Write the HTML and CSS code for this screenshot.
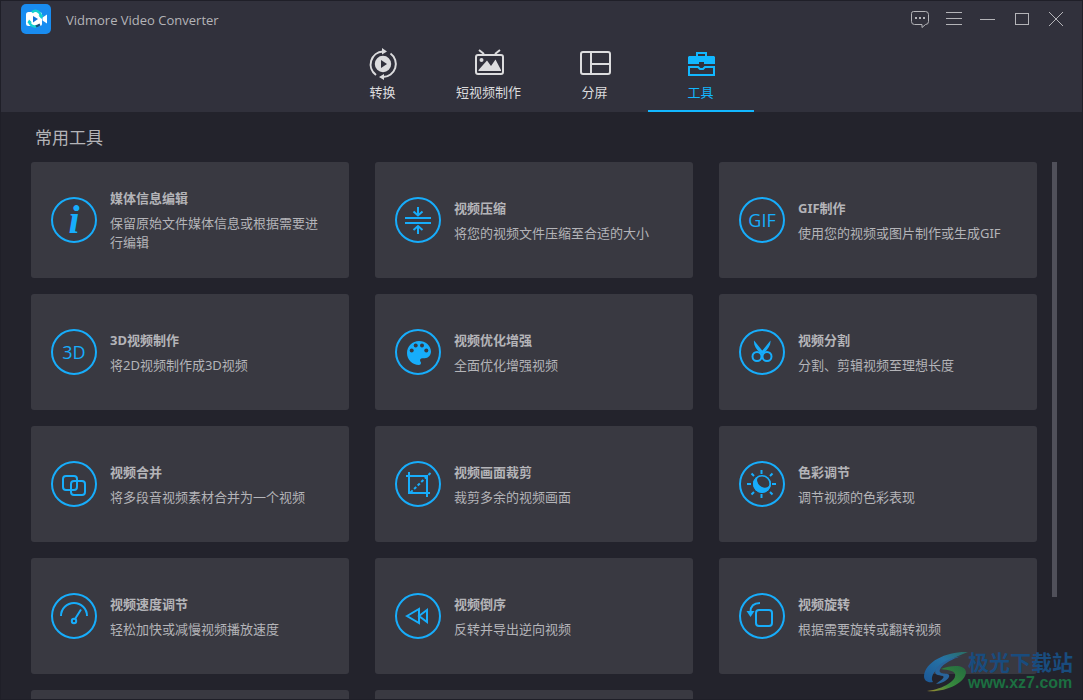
FILE: index.html
```html
<!DOCTYPE html>
<html lang="zh-CN">
<head>
<meta charset="utf-8">
<meta name="viewport" content="width=device-width, initial-scale=1">
<title>Vidmore Video Converter</title>
<link rel="stylesheet" href="styles.css">
</head>
<body>
<div class="window">
  <header class="header">
    <div class="titlebar">
      <svg class="logo" viewBox="0 0 30 30" aria-hidden="true">
        <rect width="30" height="30" rx="5" fill="#198cf0"/>
        <rect x="5" y="8" width="16" height="14" rx="2.500" fill="#fff"/>
        <path d="M21.500 13.500L26 10.500V19.500L21.500 16.500Z" fill="#fff"/>
        <path d="M11 8.500C14 5 19 7 20 12" fill="none" stroke="#12cfd0" stroke-width="2.500"/>
        <path d="M8 17C8.500 21 12 23.500 16 22" fill="none" stroke="#12cfd0" stroke-width="2.500"/>
        <path d="M6.500 19L8 15.500L11 18.500ZM17.500 11.500L22.500 11L20.500 15Z" fill="#12cfd0"/>
        <path d="M15 22.500L19 20.500" stroke="#174e78" stroke-width="2"/>
        <path d="M12 12L17 15L12 18.500Z" fill="#1272d8"/>
      </svg>
      <span class="app-name">Vidmore Video Converter</span>
      <div class="controls">
        <button class="control" type="button" aria-label="反馈"><svg viewBox="0 0 20 20"><path d="M3.500 2.500H15.500Q18.500 2.500 18.500 5.500V12.500Q18.500 15.500 15.500 15.500L12 18.500V15.500H4.500Q1.500 15.500 1.500 12.500V4.500Q1.500 2.500 3.500 2.500Z"/><path d="M5 9H7M9 9H11M13 9H15" stroke-width="2"/></svg></button>
        <button class="control" type="button" aria-label="菜单"><svg viewBox="0 0 20 20"><path d="M2 3.500H18M2 9.500H18M2 15.500H18"/></svg></button>
        <button class="control" type="button" aria-label="最小化"><svg viewBox="0 0 20 20"><path d="M2 10.500H17"/></svg></button>
        <button class="control" type="button" aria-label="最大化"><svg viewBox="0 0 20 20"><rect x="3.500" y="4.500" width="13" height="11"/></svg></button>
        <button class="control" type="button" aria-label="关闭"><svg viewBox="0 0 20 20"><path d="M3 3L17 17M17 3L3 17"/></svg></button>
      </div>
    </div>
    <nav class="tabs">
      <button class="tab" type="button">
        <svg class="tab-icon" viewBox="0 0 32 32" aria-hidden="true">
          <g fill="none" stroke="currentColor" stroke-width="2"><path d="M9 27A13 13 0 0 1 16 3.500"/><path d="M23.500 5.500A13 13 0 0 1 16 29"/></g>
          <path d="M15 0L20 3.500L15 6.500ZM17 26L12 29L17 32Z" fill="currentColor"/>
          <path fill="currentColor" fill-rule="evenodd" d="M16 7.800A8.200 8.200 0 1 1 16 24.200A8.200 8.200 0 1 1 16 7.800ZM14 12V20L20 16Z"/>
        </svg>
        <span>转换</span>
      </button>
      <button class="tab" type="button">
        <svg class="tab-icon" viewBox="0 0 32 32" aria-hidden="true">
          <g fill="none" stroke="currentColor" stroke-width="2"><rect x="3" y="7" width="27" height="19" rx="2"/><path d="M6 2L11 6M27 2L22 6"/></g>
          <circle cx="8.500" cy="12" r="2" fill="currentColor"/>
          <path d="M5.500 23V22L14 12.500L18 18L22.500 11.500L28 22V23Z" fill="currentColor"/>
        </svg>
        <span>短视频制作</span>
      </button>
      <button class="tab" type="button">
        <svg class="tab-icon" viewBox="0 0 32 32" aria-hidden="true">
          <g fill="none" stroke="currentColor" stroke-width="2"><rect x="2" y="4" width="29" height="22" rx="2"/><path d="M12 4V26M12 16H31"/></g>
        </svg>
        <span>分屏</span>
      </button>
      <button class="tab tab-active" type="button" aria-current="page">
        <svg class="tab-icon" viewBox="0 0 32 32" aria-hidden="true">
          <path d="M12 9V5H21V9" fill="none" stroke="currentColor" stroke-width="2"/>
          <path d="M4 8H29L30 9V16H19V14H14V16H3V9Z" fill="currentColor"/>
          <path d="M4 19H13L15 21H18L20 19H29V27H4Z" fill="none" stroke="currentColor" stroke-width="2"/>
        </svg>
        <span>工具</span>
      </button>
    </nav>
  </header>

  <main class="content">
    <h1 class="heading">常用工具</h1>
    <div class="scroller">
      <div class="tools">
        <button class="tool" type="button">
          <span class="badge badge-info" aria-hidden="true">i</span>
          <span class="tool-text"><strong class="tool-name">媒体信息编辑</strong><span class="tool-desc">保留原始文件媒体信息或根据需要进行编辑</span></span>
        </button>
        <button class="tool" type="button">
          <span class="badge"><svg viewBox="0 0 42 42" aria-hidden="true"><path d="M8 19H34M8 24H34M21 8V16M16.500 12.500L21 16.500L25.500 12.500M21 35V27M16.500 31L21 27L25.500 31"/></svg></span>
          <span class="tool-text"><strong class="tool-name">视频压缩</strong><span class="tool-desc">将您的视频文件压缩至合适的大小</span></span>
        </button>
        <button class="tool" type="button">
          <span class="badge badge-word" aria-hidden="true">GIF</span>
          <span class="tool-text"><strong class="tool-name">GIF制作</strong><span class="tool-desc">使用您的视频或图片制作或生成GIF</span></span>
        </button>
        <button class="tool" type="button">
          <span class="badge badge-word" aria-hidden="true">3D</span>
          <span class="tool-text"><strong class="tool-name">3D视频制作</strong><span class="tool-desc">将2D视频制作成3D视频</span></span>
        </button>
        <button class="tool" type="button">
          <span class="badge"><svg viewBox="0 0 42 42" aria-hidden="true"><path class="solid" d="M22 10C15.400 10 10 15.400 10 22S15.400 34 22 34C23.100 34 24 33.100 24 32C24 31.500 23.800 31 23.500 30.700C22.400 29 23.400 27.300 25.500 27.300H27.700C31.300 27.300 34 24.300 34 20.600C34 14.800 28.600 10 22 10Z"/><g class="hole"><circle cx="14.700" cy="19.500" r="2"/><circle cx="18.700" cy="14.500" r="2"/><circle cx="25" cy="14.500" r="2"/><circle cx="29.300" cy="19.500" r="2"/></g></svg></span>
          <span class="tool-text"><strong class="tool-name">视频优化增强</strong><span class="tool-desc">全面优化增强视频</span></span>
        </button>
        <button class="tool" type="button">
          <span class="badge"><svg viewBox="0 0 42 42" aria-hidden="true"><circle cx="16" cy="25.500" r="4.500"/><circle cx="26" cy="25.500" r="4.500"/><path class="solid" d="M13 9.500L22 20.500L24 22L22 23L19 21.500C15 18 12.500 14 13 9.500ZM29.500 9.500C30 14 27 18 23.500 21.500L20 23L18.500 22L20.500 20.500Z"/></svg></span>
          <span class="tool-text"><strong class="tool-name">视频分割</strong><span class="tool-desc">分割、剪辑视频至理想长度</span></span>
        </button>
        <button class="tool" type="button">
          <span class="badge"><svg viewBox="0 0 42 42" aria-hidden="true"><rect x="10" y="13" width="14" height="14" rx="3"/><rect x="18" y="18" width="14" height="14" rx="3"/></svg></span>
          <span class="tool-text"><strong class="tool-name">视频合并</strong><span class="tool-desc">将多段音视频素材合并为一个视频</span></span>
        </button>
        <button class="tool" type="button">
          <span class="badge"><svg viewBox="0 0 42 42" aria-hidden="true"><path d="M12 9V30H33M9 13H30V34"/><path d="M13.500 29.500L34 9.500" stroke-dasharray="3 2"/></svg></span>
          <span class="tool-text"><strong class="tool-name">视频画面裁剪</strong><span class="tool-desc">裁剪多余的视频画面</span></span>
        </button>
        <button class="tool" type="button">
          <span class="badge"><svg viewBox="0 0 42 42" aria-hidden="true"><circle class="solid" cx="21" cy="21" r="9"/><ellipse class="hole" cx="22.500" cy="18.500" rx="7" ry="5.500" transform="rotate(40 22.500 18.500)"/><circle cx="21" cy="21" r="8.200" stroke-width="1.500"/><path d="M20.500 7V11M20.500 31V35M6 21H10M31 21H35M10.500 10.500L13 13M31.500 10.500L29 13M10.500 31.500L13 29M31.500 31.500L29 29"/></svg></span>
          <span class="tool-text"><strong class="tool-name">色彩调节</strong><span class="tool-desc">调节视频的色彩表现</span></span>
        </button>
        <button class="tool" type="button">
          <span class="badge"><svg viewBox="0 0 42 42" aria-hidden="true"><path d="M8 21A13 13 0 0 1 34 21M28 14.500L22 24"/><circle cx="21" cy="26" r="2.200"/></svg></span>
          <span class="tool-text"><strong class="tool-name">视频速度调节</strong><span class="tool-desc">轻松加快或减慢视频播放速度</span></span>
        </button>
        <button class="tool" type="button">
          <span class="badge"><svg viewBox="0 0 42 42" aria-hidden="true"><path d="M10 21L22 14V28ZM22 21L30 15V27Z"/></svg></span>
          <span class="tool-text"><strong class="tool-name">视频倒序</strong><span class="tool-desc">反转并导出逆向视频</span></span>
        </button>
        <button class="tool" type="button">
          <span class="badge"><svg viewBox="0 0 42 42" aria-hidden="true"><rect x="15" y="15" width="16" height="16" rx="3"/><path d="M19 8C13 8 9.500 11 9.500 17"/><path class="solid" d="M5.500 16H13.500L9.500 22Z"/></svg></span>
          <span class="tool-text"><strong class="tool-name">视频旋转</strong><span class="tool-desc">根据需要旋转或翻转视频</span></span>
        </button>
        <div class="tool"></div>
        <div class="tool"></div>
      </div>
      <div class="scrollbar"><div class="thumb"></div></div>
    </div>
  </main>

  <div class="watermark">
    <svg class="watermark-logo" viewBox="0 0 44 42" aria-hidden="true">
      <defs>
        <linearGradient id="sea" x1="0" y1="1" x2="1" y2="0"><stop offset="0" stop-color="#1c5796"/><stop offset="0.600" stop-color="#2673a6"/><stop offset="1" stop-color="#2a6f60"/></linearGradient>
        <linearGradient id="leaf" x1="0" y1="1" x2="1" y2="0"><stop offset="0" stop-color="#a08c32"/><stop offset="0.400" stop-color="#388a3d"/><stop offset="1" stop-color="#236b40"/></linearGradient>
      </defs>
      <path d="M44 1C24 0 1 10 0 25C0 30 4 32 9 31C5 25 12 13 44 1Z" fill="url(#sea)"/>
      <path d="M17 18C27 14 41 13 42 21C42 32 20 42 3 40C20 38 33 29 31 23C30 20 25 19 17 18Z" fill="url(#leaf)"/>
      <path d="M38 5C24 9 14 17 16 21C18 24 27 21 25 26C23 30 16 33 12 33C17 29 21 27 19 25C14 24 9 24 12 18C16 12 25 7 38 5Z" fill="#29649b"/>
    </svg>
    <div class="watermark-text"><span class="watermark-name">极光下载站</span><span class="watermark-site">www.xz7.com</span></div>
  </div>
</div>
</body>
</html>
```
FILE: styles.css
```css
* {
  box-sizing: border-box;
}

body {
  margin: 0;
  background: #23232c;
  color: #b4b4b8;
  font: 13px/20px "Noto Sans", "Noto Sans CJK SC", sans-serif;
}

button {
  padding: 0;
  border: 0;
  background: none;
  color: inherit;
  font: inherit;
}

.window {
  position: relative;
  display: flex;
  flex-direction: column;
  height: 100vh;
  overflow: hidden;
  border: 1px solid #1f1f28;
}

.header {
  flex: none;
  background: #31313c;
}

.titlebar {
  display: flex;
  align-items: center;
  height: 36px;
  padding: 0 9px 0 20px;
}

.logo {
  width: 30px;
  height: 30px;
}

.app-name {
  margin-left: 15px;
  padding-top: 2px;
  font-family: "Open Sans", sans-serif;
  font-size: 13px;
}

.controls {
  display: flex;
  margin-left: auto;
}

.control {
  display: flex;
  align-items: center;
  justify-content: center;
  width: 34px;
  height: 36px;
}

.control svg {
  width: 20px;
  height: 20px;
  fill: none;
  stroke: #b4b4b8;
}

.tabs {
  display: flex;
  justify-content: center;
}

.tab {
  display: flex;
  flex-direction: column;
  align-items: center;
  gap: 2px;
  width: 106px;
  height: 75px;
  padding-top: 11px;
  border-bottom: 2px solid transparent;
  color: #dcdcde;
}

.tab-active {
  border-color: #12b7ff;
  color: #12b7ff;
}

.tab-icon {
  width: 32px;
  height: 32px;
}

.content {
  display: flex;
  flex: 1;
  flex-direction: column;
  min-height: 0;
}

.heading {
  margin: 0;
  padding: 14px 34px 12px;
  font-size: 17px;
  font-weight: 400;
  line-height: 24px;
}

.scroller {
  display: flex;
  flex: 1;
  gap: 15px;
  min-height: 0;
  padding: 0 25px 0 30px;
}

.tools {
  display: grid;
  flex: 1;
  grid-template-columns: repeat(3, 1fr);
  grid-auto-rows: 116px;
  gap: 16px 26px;
}

.tool {
  display: flex;
  align-items: center;
  gap: 13px;
  padding: 0 20px;
  border-radius: 3px;
  background: #393941;
  text-align: left;
}

.badge {
  display: flex;
  flex: none;
  align-items: center;
  justify-content: center;
  width: 46px;
  height: 46px;
  border: 2px solid #17adfb;
  border-radius: 50%;
  color: #17adfb;
}

.badge svg {
  width: 42px;
  height: 42px;
  fill: none;
  stroke: #17adfb;
  stroke-width: 2;
}

.badge .solid {
  fill: #17adfb;
  stroke: none;
}

.badge .hole {
  fill: #393941;
  stroke: none;
}

.badge-info {
  font: italic bold 40px/40px "Liberation Serif", serif;
}

.badge-word {
  font: 500 18px/42px "Open Sans", sans-serif;
}

.tool-text {
  display: flex;
  flex: 1;
  flex-direction: column;
  gap: 6px;
}

.tool-name {
  font-weight: 700;
  line-height: 20px;
}

.tool-desc {
  line-height: 19px;
}

.scrollbar {
  width: 5px;
}

.thumb {
  height: 81%;
  background: #50505a;
}

.watermark {
  position: absolute;
  right: 9px;
  bottom: 6px;
  display: flex;
  align-items: center;
}

.watermark-logo {
  width: 44px;
  height: 42px;
}

.watermark-text {
  display: flex;
  flex-direction: column;
  font-weight: 700;
}

.watermark-name {
  color: #194c7e;
  font-size: 21px;
  line-height: 22px;
}

.watermark-site {
  color: #1c6f41;
  font: bold 16px/20px "Liberation Sans", sans-serif;
}
```
